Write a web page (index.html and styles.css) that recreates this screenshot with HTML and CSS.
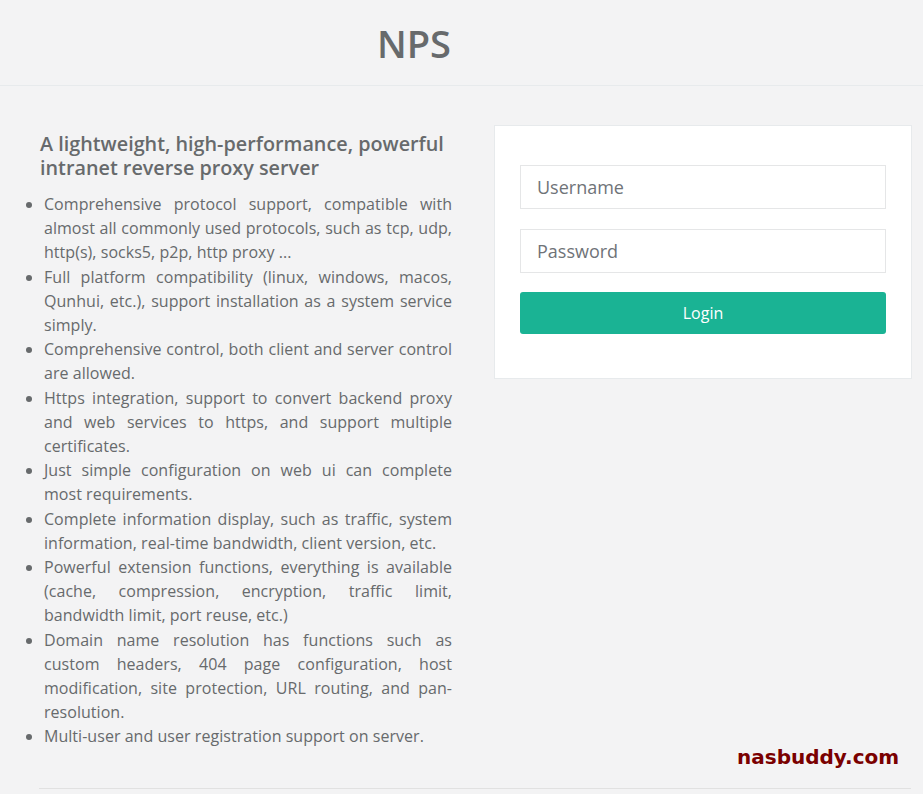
FILE: index.html
```html
<!DOCTYPE html>
<html lang="en">
<head>
    <meta charset="UTF-8">
    <meta name="viewport" content="width=device-width, initial-scale=1.0">
    <title>NPS</title>
    <link rel="stylesheet" href="styles.css">
</head>
<body>
    <div class="top-bar">
        <h1>NPS</h1>
    </div>

    <div class="login-columns">
        <div class="intro">
            <h2>A lightweight, high-performance, powerful intranet reverse proxy server</h2>
            <ul>
                <li>Comprehensive protocol support, compatible with almost all commonly used protocols, such as tcp, udp, http(s), socks5, p2p, http proxy ...</li>
                <li>Full platform compatibility (linux, windows, macos, Qunhui, etc.), support installation as a system service simply.</li>
                <li>Comprehensive control, both client and server control are allowed.</li>
                <li>Https integration, support to convert backend proxy and web services to https, and support multiple certificates.</li>
                <li>Just simple configuration on web ui can complete most requirements.</li>
                <li>Complete information display, such as traffic, system information, real-time bandwidth, client version, etc.</li>
                <li>Powerful extension functions, everything is available (cache, compression, encryption, traffic limit, bandwidth limit, port reuse, etc.)</li>
                <li>Domain name resolution has functions such as custom headers, 404 page configuration, host modification, site protection, URL routing, and pan-resolution.</li>
                <li>Multi-user and user registration support on server.</li>
            </ul>
        </div>

        <div class="login-box">
            <form class="login-form">
                <input type="text" class="form-control" placeholder="Username">
                <input type="password" class="form-control" placeholder="Password">
                <button type="button" class="btn-login">Login</button>
            </form>
        </div>
    </div>

    <hr class="bottom-line">

    <div class="watermark">nasbuddy.com</div>
</body>
</html>
```

FILE: styles.css
```css
:root {
    --text: #676a6c;
    --green: #1ab394;
    --bg: #f3f3f4;
    --line: #e7eaec;
}
body {
    font-family: 'Open Sans', 'Liberation Sans', sans-serif;
    background: var(--bg);
    color: var(--text);
    margin: 0;
    min-height: 794px;
    position: relative;
}
.top-bar {
    height: 85px;
    border-bottom: 1px solid var(--line);
    display: flex;
    align-items: center;
    justify-content: center;
    padding-right: 95px;
}
.top-bar h1 {
    margin: 0;
    font-size: 38px;
    font-weight: 600;
    letter-spacing: 0;
}
.login-columns {
    display: grid;
    grid-template-columns: 413px 418px;
    gap: 42px;
    padding: 39px 0 0 39px;
    align-items: start;
}
.intro h2 {
    font-size: 19.8px;
    font-weight: 600;
    line-height: 24px;
    margin: 7px 0 12px 1px;
}
.intro ul {
    margin: 0;
    padding-left: 5px;
}
.intro li {
    font-size: 16px;
    line-height: 24.2px;
    letter-spacing: 0.04px;
    text-align: justify;
}
.login-box {
    background: #fff;
    border: 1px solid var(--line);
    padding: 39px 25px 44px;
}
.login-form {
    display: flex;
    flex-direction: column;
    gap: 20px;
}
.form-control {
    height: 44px;
    box-sizing: border-box;
    border: 1px solid #e5e6e7;
    padding: 0 16px;
    font-family: inherit;
    font-size: 18px;
    color: var(--text);
    background: #fff;
    outline: none;
}
.form-control::placeholder {
    color: #6f7378;
}
.btn-login {
    height: 42px;
    margin-top: -1px;
    background: var(--green);
    border: none;
    border-radius: 3px;
    color: #fff;
    font-family: inherit;
    font-size: 16px;
    cursor: pointer;
}
.bottom-line {
    border: none;
    border-top: 1px solid #e1e1e1;
    margin: 39px 12px 0 39px;
}
.watermark {
    position: absolute;
    left: 737px;
    top: 745px;
    font-family: 'DejaVu Sans', sans-serif;
    font-weight: bold;
    font-size: 20px;
    color: #7a0000;
}
```
